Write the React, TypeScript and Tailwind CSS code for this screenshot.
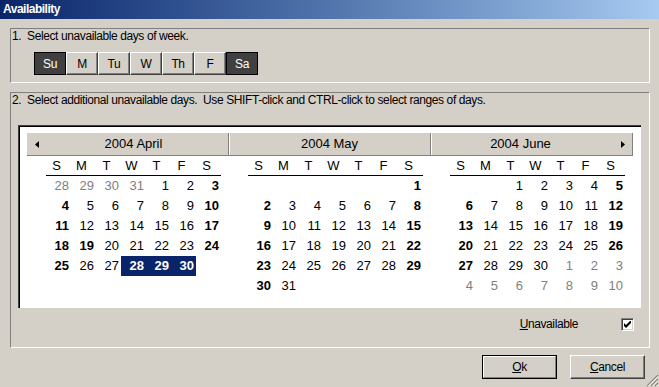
import React from "react";

type Cell = { d: number; muted?: boolean; bold?: boolean; sel?: boolean } | null;

function buildMonth(
  firstDow: number,
  days: number,
  prevDays: number,
  lead: boolean,
  trail: boolean,
  extraBold: number[],
  sel: number[]
): Cell[][] {
  const cells: Cell[] = [];
  for (let i = 0; i < firstDow; i++) cells.push(lead ? { d: prevDays - firstDow + 1 + i, muted: true } : null);
  for (let d = 1; d <= days; d++) {
    const dow = cells.length % 7;
    cells.push({ d, bold: dow === 0 || dow === 6 || extraBold.includes(d) || sel.includes(d), sel: sel.includes(d) });
  }
  let n = 1;
  while (cells.length < 42) cells.push(trail ? { d: n++, muted: true } : null);
  const rows: Cell[][] = [];
  for (let r = 0; r < 6; r++) rows.push(cells.slice(r * 7, r * 7 + 7));
  return rows;
}

const months = [
  { title: "2004 April", rows: buildMonth(4, 30, 31, true, false, [19], [28, 29, 30]) },
  { title: "2004 May", rows: buildMonth(6, 31, 30, false, false, [], []) },
  { title: "2004 June", rows: buildMonth(2, 30, 31, false, true, [], []) },
];

const weekDays = ["Su", "M", "Tu", "W", "Th", "F", "Sa"];
const letters = ["S", "M", "T", "W", "T", "F", "S"];

function DayCell({ cell }: { cell: Cell }) {
  if (!cell) return <div className="h-[20px] w-[25px]" />;
  const tone = cell.sel
    ? "bg-[#0a246a] text-white font-bold"
    : cell.muted
    ? "text-[#808080]"
    : cell.bold
    ? "font-bold text-black"
    : "text-black";
  return <div className={`h-[20px] w-[25px] pr-[2px] text-right leading-[20px] ${tone}`}>{cell.d}</div>;
}

function MonthGrid({ rows }: { rows: Cell[][] }) {
  return (
    <div className="w-[202px] pl-[19px]">
      <div className="w-[175px]">
        <div className="flex h-[20px] border-b border-black">
          {letters.map((l, i) => (
            <div key={i} className="w-[25px] pr-[4px] text-center leading-[19px]">
              {l}
            </div>
          ))}
        </div>
        {rows.map((row, r) => (
          <div key={r} className="flex">
            {row.map((c, i) => (
              <DayCell key={i} cell={c} />
            ))}
          </div>
        ))}
      </div>
    </div>
  );
}

function Calendar() {
  return (
    <div className="ml-[7px] mt-[18px] h-[183px] w-[623px] border-l border-t border-[#404040] bg-white pl-[8px] pt-[7px] shadow-[inset_1px_1px_0_#000] text-[13px] tracking-normal font-['Liberation_Sans',Arial,sans-serif]">
      <div className="flex h-[23px] w-[606px] border-b border-r border-[#808080] bg-[#d4d0c8]">
        <div className="flex w-[202px] items-center border-r border-[#808080] pl-[8px]">
          <svg width="4" height="7" viewBox="0 0 4 7">
            <path d="M4 0 L0 3.5 L4 7Z" fill="#000" />
          </svg>
          <div className="flex-1 text-center">{months[0].title}</div>
        </div>
        <div className="flex w-[202px] items-center justify-center border-r border-[#808080] shadow-[inset_1px_0_0_#fff]">
          {months[1].title}
        </div>
        <div className="flex w-[201px] items-center shadow-[inset_1px_0_0_#fff]">
          <div className="w-[179px] text-center">{months[2].title}</div>
          <svg className="ml-[11px]" width="4" height="7" viewBox="0 0 4 7">
            <path d="M0 0 L4 3.5 L0 7Z" fill="#000" />
          </svg>
        </div>
      </div>
      <div className="flex">
        {months.map((m) => (
          <MonthGrid key={m.title} rows={m.rows} />
        ))}
      </div>
    </div>
  );
}

function Check() {
  return (
    <div className="flex h-[13px] w-[13px] items-center justify-center border border-b-white border-l-[#808080] border-r-white border-t-[#808080] bg-white shadow-[inset_1px_1px_0_#404040,inset_-1px_-1px_0_#d4d0c8]">
      <svg width="7" height="7" viewBox="0 0 7 7">
        <path d="M0 2 L2 4 L7 -1 L7 2 L2 7 L0 5Z" fill="#000" />
      </svg>
    </div>
  );
}

export default function App() {
  return (
    <div className="relative h-[387px] w-[659px] overflow-hidden bg-[#d4d0c8] text-[12px] tracking-[-0.4px] text-black font-['Liberation_Sans',Arial,sans-serif]">
      <div className="h-[19px] bg-linear-to-r from-[#0a246a] to-[#a6caf0] pl-[3px] font-bold leading-[19px] tracking-[-0.5px] text-white">
        Availability
      </div>

      <div className="ml-[10px] mt-[9px] h-[55px] w-[640px] border border-b-white border-l-[#808080] border-r-white border-t-[#808080]">
        <div className="whitespace-pre pl-[1px] leading-[14px]">1.  Select unavailable days of week.</div>
        <div className="ml-[23px] mt-[9px] flex">
          {weekDays.map((d, i) => {
            const off = i === 0 || i === 6;
            return (
              <div
                key={d}
                className={
                  off
                    ? "flex h-[23px] w-[32px] items-center justify-center border border-black bg-[#404040] text-white"
                    : "flex h-[23px] w-[32px] items-center justify-center border border-b-[#404040] border-l-white border-r-[#404040] border-t-white bg-[#d4d0c8] shadow-[inset_-1px_-1px_0_#808080]"
                }
              >
                {d}
              </div>
            );
          })}
        </div>
      </div>

      <div className="ml-[10px] mt-[9px] h-[256px] w-[640px] border border-b-white border-l-[#808080] border-r-white border-t-[#808080]">
        <div className="whitespace-pre pl-[1px] leading-[14px]">
          2.  Select additional unavailable days.  Use SHIFT-click and CTRL-click to select ranges of days.
        </div>
        <Calendar />
        <div className="mt-[9px] flex h-[14px] items-center justify-end gap-[43px] pr-[15px]">
          <div className="leading-[14px]">
            <span className="underline">U</span>navailable
          </div>
          <Check />
        </div>
      </div>

      <div className="mt-[7px] flex justify-end gap-[13px] pr-[14px]">
        <div className="h-[24px] w-[75px] border border-black">
          <div className="flex h-full items-center justify-center border border-b-[#808080] border-l-white border-r-[#808080] border-t-white">
            <span>
              <span className="underline">O</span>k
            </span>
          </div>
        </div>
        <div className="flex h-[24px] w-[75px] items-center justify-center border border-b-[#404040] border-l-white border-r-[#404040] border-t-white shadow-[inset_-1px_-1px_0_#808080]">
          <span>
            <span className="underline">C</span>ancel
          </span>
        </div>
      </div>

      <svg className="absolute bottom-0 right-0" width="12" height="12" viewBox="0 0 12 12">
        <path d="M11 0 L0 11 M11 4 L4 11 M11 8 L8 11" stroke="#808080" strokeWidth="1.2" />
        <path d="M11 1.5 L1.5 11 M11 5.5 L5.5 11 M11 9.5 L9.5 11" stroke="#fff" strokeWidth="1" />
      </svg>
    </div>
  );
}
